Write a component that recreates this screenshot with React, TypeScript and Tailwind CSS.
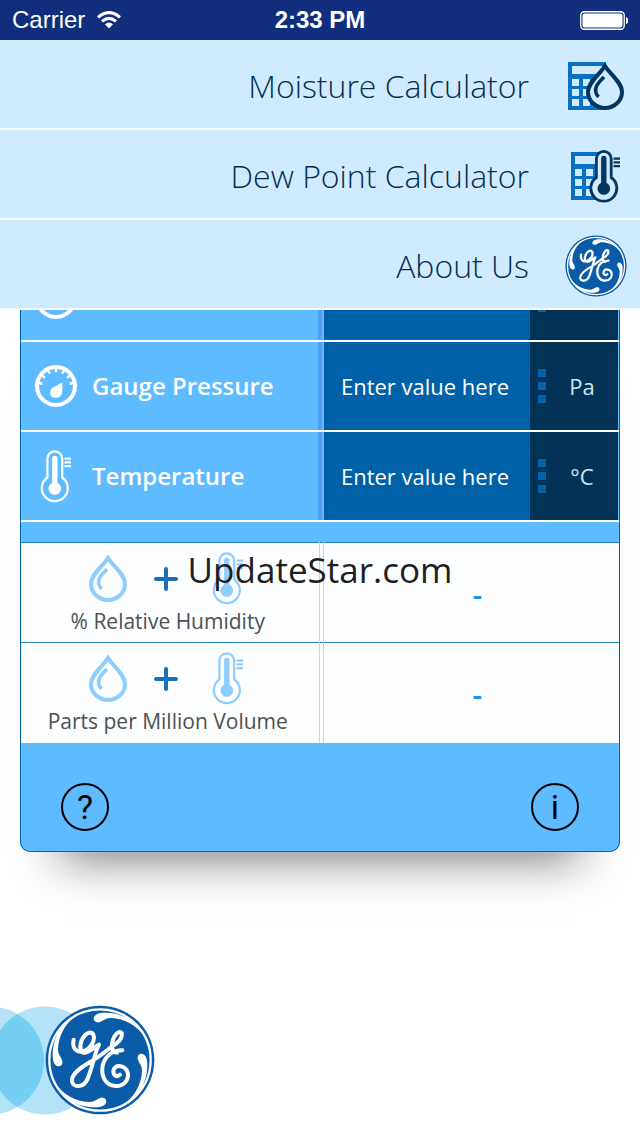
import type { ReactNode } from "react";

function Drop({ className, fill = "none" }: { className: string; fill?: string }) {
  return (
    <svg viewBox="0 0 38 47" className={className} fill="none" stroke="currentColor" strokeWidth="4" aria-hidden="true">
      <path fill={fill} d="M19 3 C15 10 2 19 2 29 A17 16 0 0 0 36 29 C36 19 23 10 19 3Z" />
      <path strokeWidth="3.6" d="M18 14 C14 18 12 20 10.5 23 Q8 29 12.5 34" />
    </svg>
  );
}

function Thermometer({ className, fill = "none", weight = 2.2 }: { className: string; fill?: string; weight?: number }) {
  return (
    <svg viewBox="0 0 32 53" className={className} fill="none" stroke="currentColor" aria-hidden="true">
      <path fill={fill} strokeWidth={weight} d="M7.4 27.5 V8.8 a7.4 7.4 0 0 1 14.8 0 V27.5 A13 13 0 1 1 7.4 27.5Z" />
      <path strokeWidth="5.4" strokeLinecap="round" d="M14.8 8.5 V36" />
      <circle cx="14.8" cy="38.5" r="6.3" fill="currentColor" stroke="none" />
      <path strokeWidth="2.2" d="M24.5 8.6 H31 M24.5 12.4 H31 M24.5 16.2 H31" />
    </svg>
  );
}

function Calculator({ className }: { className: string }) {
  return (
    <svg viewBox="0 0 42 48" className={className} aria-hidden="true">
      <path
        fill="#0871c4"
        fillRule="evenodd"
        d="M0 0H38V48H0Z M4 4V12H34V4Z M4 17V24H11V17Z M15 17V24H22V17Z M26 17V24H33V17Z M4 27V34H11V27Z M15 27V34H22V27Z M26 27V34H33V27Z M4 37V44H11V37Z M15 37V44H22V37Z M26 37V44H33V37Z"
      />
    </svg>
  );
}

function NarrowCalculator({ className }: { className: string }) {
  return (
    <svg viewBox="0 0 36 48" className={className} aria-hidden="true">
      <path
        fill="#0871c4"
        fillRule="evenodd"
        d="M0 0H30V48H0Z M4 4V12H26V4Z M4 17V24H11V17Z M15 17V24H22V17Z M4 27V34H11V27Z M15 27V34H22V27Z M4 37V44H11V37Z M15 37V44H22V37Z"
      />
    </svg>
  );
}

function Gauge({ className }: { className: string }) {
  return (
    <svg viewBox="0 0 42 42" className={className} fill="none" stroke="currentColor" aria-hidden="true">
      <circle cx="21" cy="21" r="19" strokeWidth="4" />
      {[-80, -53, -27, 0, 27, 53, 80].map((angle) => (
        <path key={angle} strokeWidth="2.6" d="M21 3 V7.2" transform={`rotate(${angle} 21 21)`} />
      ))}
      <path fill="currentColor" stroke="none" d="M27.3 17.5 L18.5 22.3 C13.5 25.5 14.5 31.5 18.5 32.6 C23 33.5 27 31.5 27.3 26.5Z" />
    </svg>
  );
}

function GeMonogram() {
  return (
    <>
      <circle cx="300" cy="210" r="163" fill="#0b5ca8" />
      <circle cx="300" cy="210" r="152" fill="none" stroke="#fff" strokeWidth="7" />
      {[0, 90, 180, 270].map((angle) => (
        <path
          key={angle}
          fill="#fff"
          transform={`rotate(${angle} 300 210)`}
          d="M291 97 C276 95 277 73 301 69 C357 62 418 92 442 150 C412 104 372 86 334 84 C312 83 306 99 291 97Z"
        />
      ))}
      <g fill="none" stroke="#fff" strokeWidth="12" strokeLinecap="round" strokeLinejoin="round">
        <path d="M221 149 C215 176 232 190 250 184 C272 176 287 151 280 134 C273 121 254 130 245 151 C237 172 241 190 256 188 C273 184 283 170 297 164 C283 190 278 232 262 268 C251 293 221 294 216 275 C212 253 240 234 270 216 C301 199 318 183 335 170 C355 159 369 143 365 129 C358 120 344 133 339 149 C333 170 335 188 351 188" />
        <path d="M367 181 C337 181 314 199 308 227 C302 260 318 286 346 288 C373 289 388 268 383 247 C376 226 348 222 341 239 C336 254 350 264 360 254" />
      </g>
    </>
  );
}

function GeLogo({ className }: { className: string }) {
  return (
    <svg viewBox="135 45 330 330" className={className} role="img" aria-label="GE">
      <GeMonogram />
    </svg>
  );
}

function StatusBar() {
  return (
    <header className="grid h-10 grid-cols-3 items-center bg-[#102e7c] px-3 text-2xl text-white">
      <div className="flex items-center gap-3">
        <span>Carrier</span>
        <svg viewBox="0 0 24 18" className="h-[18px] w-6" fill="none" stroke="#fff" strokeWidth="3" aria-hidden="true">
          <path d="M1 6.3 Q12 -3 23 6.3" />
          <path d="M5 10.4 Q12 4.4 19 10.4" />
          <path d="M8 13.2 Q12 10 16 13.2 L12 17.6Z" fill="#fff" stroke="none" />
        </svg>
      </div>
      <time className="text-center font-bold">2:33 PM</time>
      <svg viewBox="0 0 48 19" className="h-[19px] w-12 justify-self-end" aria-hidden="true">
        <rect x="0.75" y="0.75" width="43.5" height="17.5" rx="3.5" fill="none" stroke="#fff" strokeWidth="1.3" />
        <rect x="2.5" y="2.5" width="40" height="14" rx="2" fill="#fff" />
        <path d="M46 6 Q48.5 7 48.5 9.5 T46 13Z" fill="#fff" />
      </svg>
    </header>
  );
}

function MenuItem({ label, href, children }: { label: string; href: string; children: ReactNode }) {
  return (
    <a href={href} className="flex h-[90px] items-center justify-end gap-9 border-b-2 border-[#fbf8f6] bg-[#d0ebff] pt-1 pr-[13px]">
      <span className="text-[32px] leading-10 font-light text-[#04304f]">{label}</span>
      <span className="flex w-[62px] justify-center">{children}</span>
    </a>
  );
}

const rowColumns = "grid grid-cols-[297fr_6px_206fr_88fr] border-b-2 border-white pr-px";

function Divider() {
  return <div className="border-r-2 border-[#7ab2ee] bg-[#4aa1fb]" />;
}

function UnitDots() {
  return (
    <span className="flex flex-col gap-[5px]">
      <span className="size-2 bg-[#0063ab]" />
      <span className="size-2 bg-[#0063ab]" />
      <span className="size-2 bg-[#0063ab]" />
    </span>
  );
}

function FieldRow({ id, label, unit, icon }: { id: string; label: string; unit: string; icon: ReactNode }) {
  return (
    <div className={`${rowColumns} h-[90px]`}>
      <label htmlFor={id} className="flex items-center pl-3.5 text-2xl font-semibold whitespace-nowrap text-white">
        <span className="flex w-[57px] shrink-0">{icon}</span>
        {label}
      </label>
      <Divider />
      <input
        id={id}
        inputMode="decimal"
        placeholder="Enter value here"
        className="w-full min-w-0 bg-[#0061a9] pr-1 text-center text-[22px] text-white outline-none placeholder:text-white placeholder:opacity-100"
      />
      <button type="button" aria-label={`${label} unit`} className="flex items-center bg-[#023357] pl-2 text-[22px] text-[#cfe6f6]">
        <UnitDots />
        <span className="flex-1 text-center">{unit}</span>
      </button>
    </div>
  );
}

function ResultRow({ label }: { label: string }) {
  return (
    <tr className="border-t border-[#2584c9]">
      <th scope="row" className="h-[100px] w-[298px] border-r border-r-[#b5dcfb] p-0 pt-1 align-middle font-normal">
        <div className="flex items-center pl-[68px] text-[#8fcdff]">
          <Drop className="h-[47px] w-[38px]" />
          <svg viewBox="0 0 24 24" className="ml-[27px] size-6" stroke="#1b6fb5" strokeWidth="4" strokeLinecap="round" role="img" aria-label="plus">
            <path d="M12 2V22M2 12H22" />
          </svg>
          <Thermometer className="ml-[34px] h-[53px] w-8" />
        </div>
        <div className="pr-1 text-[21px] leading-8 whitespace-nowrap text-[#505050]">{label}</div>
      </th>
      <td className="w-1 border-r border-r-[#b5dcfb] p-0" />
      <td className="p-0 pt-1 pl-3 text-center text-3xl font-semibold text-[#1e93ea]">-</td>
    </tr>
  );
}

function RoundButton({ name, children }: { name: string; children: ReactNode }) {
  return (
    <button
      type="button"
      aria-label={name}
      className="flex size-12 items-center justify-center rounded-full border-2 border-black font-[Roboto,sans-serif] text-[34px] leading-none text-black"
    >
      {children}
    </button>
  );
}

export default function App() {
  return (
    <div className="flex min-h-screen flex-col bg-white font-['Liberation_Sans',Arial,sans-serif]">
      <StatusBar />
      <nav className="font-['Open_Sans',sans-serif]">
        <MenuItem label="Moisture Calculator" href="#moisture">
          <span className="relative flex w-14 text-[#04375f]">
            <Calculator className="h-12 w-[42px]" />
            <Drop fill="#d0ebff" className="absolute top-px right-0 h-[47px] w-[38px]" />
          </span>
        </MenuItem>
        <MenuItem label="Dew Point Calculator" href="#dew-point">
          <span className="relative flex w-[50px] text-[#04375f]">
            <NarrowCalculator className="h-12 w-9" />
            <Thermometer fill="#d0ebff" weight={2.8} className="absolute -top-0.5 right-0 h-[53px] w-8" />
          </span>
        </MenuItem>
        <MenuItem label="About Us" href="#about">
          <GeLogo className="size-[62px]" />
        </MenuItem>
      </nav>

      <main className="px-5 font-['Open_Sans',sans-serif]">
        <div className="relative rounded-b-[10px] border border-t-0 border-[#0063ad] bg-[#5fbbff] shadow-[0_48px_44px_-40px_rgba(0,0,0,0.5)]">
          <div className={`${rowColumns} h-8`}>
            <div className="flex items-end overflow-hidden pb-[21px] pl-3.5 text-white">
              <Gauge className="size-[42px] shrink-0" />
            </div>
            <Divider />
            <div className="bg-[#0061a9]" />
            <div className="flex items-end overflow-hidden bg-[#023357] pb-7 pl-2">
              <UnitDots />
            </div>
          </div>
          <FieldRow id="gauge-pressure" label="Gauge Pressure" unit="Pa" icon={<Gauge className="size-[42px]" />} />
          <FieldRow id="temperature" label="Temperature" unit="°C" icon={<Thermometer className="ml-[5px] h-[53px] w-8" />} />

          <table className="mt-5 w-full border-collapse bg-[#fcfeff]">
            <tbody>
              <ResultRow label="% Relative Humidity" />
              <ResultRow label="Parts per Million Volume" />
            </tbody>
          </table>

          <div className="flex justify-between px-10 pt-10 pb-5">
            <RoundButton name="Help">?</RoundButton>
            <RoundButton name="Information">i</RoundButton>
          </div>

          <div className="pointer-events-none absolute inset-x-0 top-60 text-center text-[35px] leading-10 text-[#1f1f1f]">UpdateStar.com</div>
        </div>
      </main>

      <footer className="mt-auto pb-[21px]">
        <svg viewBox="0 0 155 110" className="h-[110px] w-[155px]" role="img" aria-label="GE">
          <circle cx="-10" cy="55.5" r="54" fill="#b4e3f8" />
          <circle cx="45" cy="55.5" r="54" fill="#b4e3f8" />
          <path d="M17.5 9 A54 54 0 0 1 17.5 102 A54 54 0 0 1 17.5 9Z" fill="#74cff2" />
          <svg x="45" y="0" width="110" height="110" viewBox="135 45 330 330">
            <GeMonogram />
          </svg>
        </svg>
      </footer>
    </div>
  );
}
